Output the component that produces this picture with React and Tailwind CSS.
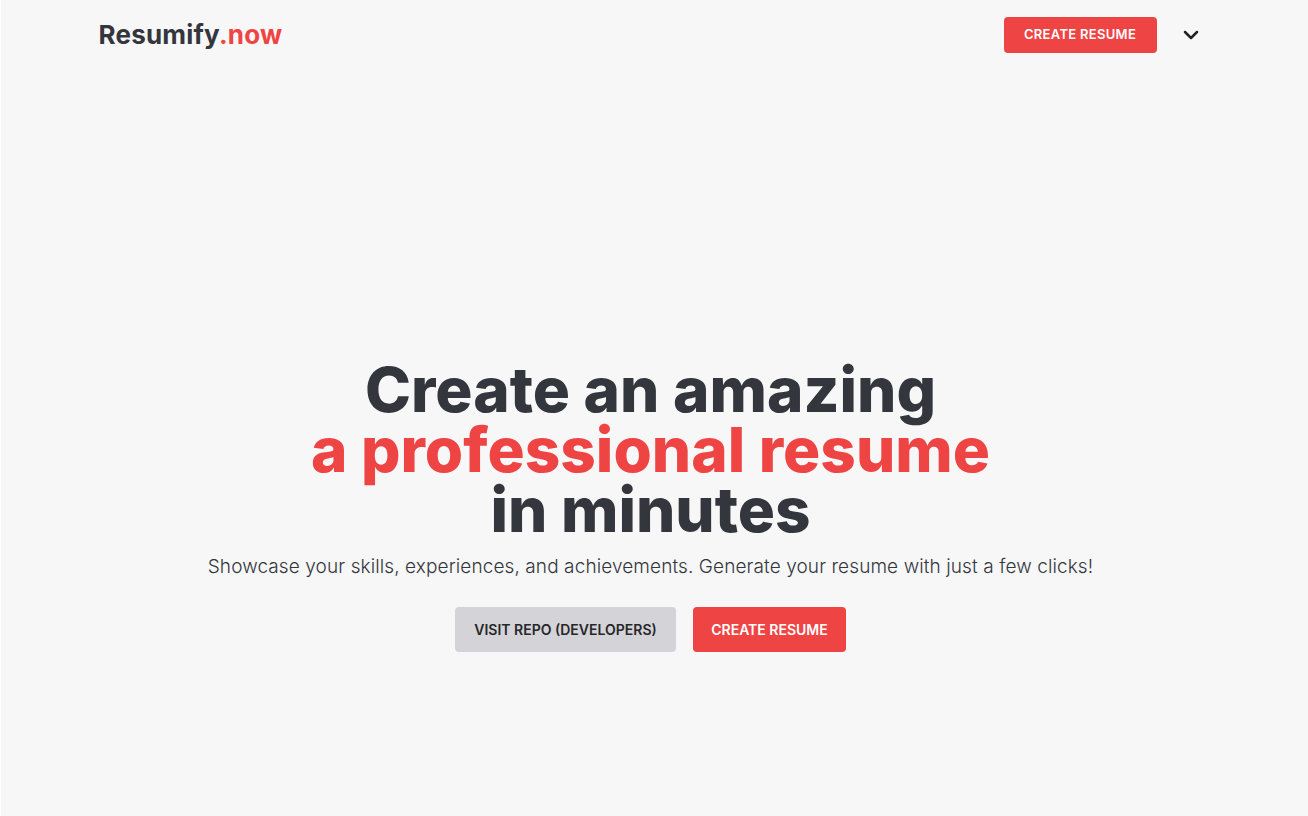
import { ChevronDown } from 'lucide-react';

export default function App() {
  return (
    <main className="min-h-screen bg-[#f7f7f7] text-[#374151] font-['Inter',sans-serif] border-l border-white">
      {/* HEADER */}
      <header className="mx-auto flex max-w-6xl items-center justify-between pl-5 pr-7 pt-[17px]">
        <div className="text-[26px] font-bold leading-[36px] tracking-[0.2px] text-[#33363d]">
          Resumify<span className="text-[#ef4444]">.now</span>
        </div>
        <div className="flex items-center">
          <button className="h-9 w-[153px] rounded bg-[#ef4444] text-[13px] font-semibold uppercase tracking-[0.3px] text-white">
            Create resume
          </button>
          <ChevronDown className="ml-[22px] size-6 text-[#222]" strokeWidth={2.5} />
        </div>
      </header>

      {/* HERO */}
      <section className="flex flex-col items-center pt-[307px] pr-2 text-center">
        <h1 className="text-[62px] font-extrabold leading-[60px] text-[#33363d]">
          Create an amazing
          <br />
          <span className="text-[#ef4444]">a professional resume</span>
          <br />
          in minutes
        </h1>
        <p className="mt-[13px] text-[19px] font-light tracking-[0.1px] text-[#33363d]">
          Showcase your skills, experiences, and achievements. Generate your resume with just a few clicks!
        </p>
        <div className="mt-[25px] flex gap-[17px]">
          <button className="h-[45px] w-[221px] rounded bg-[#d4d4d8] text-[14px] font-semibold uppercase text-[#27272a]">
            Visit repo (developers)
          </button>
          <button className="h-[45px] w-[153px] rounded bg-[#ef4444] text-[14px] font-semibold uppercase text-white">
            Create resume
          </button>
        </div>
      </section>
    </main>
  );
}
